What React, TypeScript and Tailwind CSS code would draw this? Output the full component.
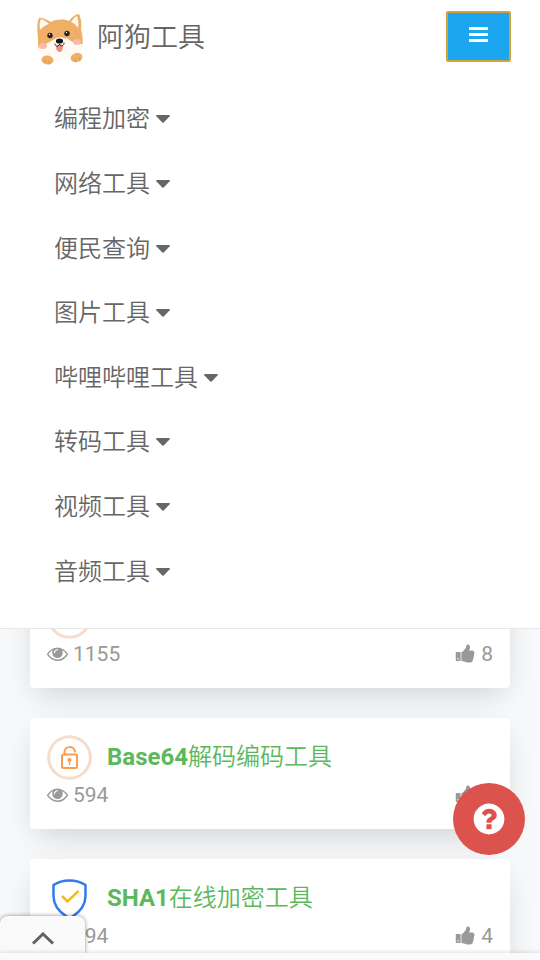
type Tool = {
	icon: 'lock' | 'shield';
	prefix: string;
	name: string;
	views: number;
	likes: number;
};

const menu = [
	'编程加密',
	'网络工具',
	'便民查询',
	'图片工具',
	'哔哩哔哩工具',
	'转码工具',
	'视频工具',
	'音频工具',
];

const tools: Tool[] = [
	{ icon: 'lock', prefix: 'MD5', name: '在线加密工具', views: 1155, likes: 8 },
	{ icon: 'lock', prefix: 'Base64', name: '解码编码工具', views: 594, likes: 5 },
	{ icon: 'shield', prefix: 'SHA1', name: '在线加密工具', views: 494, likes: 4 },
];

function DogLogo() {
	return (
		<svg className="w-12 h-[54px]" viewBox="0 0 48 54" aria-hidden="true">
			<path
				d="M2 25C1 17 1 9 3 5c2-1 8 2 12 4 6-3 13-3 18-1 3-4 7-7 10-7 2 4 3 10 2 16 2 5 2 12 1 18-2 4-7 7-11 8H12C6 42 2 37 2 32z"
				fill="#efaf66"
			/>
			<path d="M4 17C3 12 4 8 5 6c3 1 6 3 8 5-4 1-7 4-9 6z" fill="#fffaf5" />
			<path d="M35 9c2-3 4-5 6-6 1 4 2 7 1 12-2-3-4-5-7-6z" fill="#fffaf5" />
			<path
				d="M3 33c5-1 10-3 14-6 2-5 4-9 6-13 2 4 6 9 9 12 4 3 8 5 14 5 1 9-5 16-22 17C10 48 2 43 3 33z"
				fill="#fffaf3"
			/>
			<path d="M18 8c4-1 9-1 13 0 2 6 2 12-1 18-5-3-9-2-13 1-3-6-2-13 1-19z" fill="#efaf66" />
			<ellipse cx="7" cy="33" rx="4" ry="3" fill="#f9b9ac" />
			<ellipse cx="41" cy="29" rx="4" ry="3" fill="#f9b9ac" />
			<circle cx="14" cy="22.500" r="2.700" fill="#29211f" />
			<circle cx="31" cy="20.500" r="2.700" fill="#29211f" />
			<circle cx="13.500" cy="21.500" r="0.700" fill="#fff" />
			<circle cx="30.500" cy="19.500" r="0.700" fill="#fff" />
			<path d="M20 33q4-2 7-1 0 7-3 7-4 0-4-6z" fill="#f28e83" />
			<ellipse cx="23.500" cy="28" rx="3.600" ry="2.600" fill="#171313" />
			<path
				d="M19 31c0 3 4 3 4.500 0 1 3 5 2 4.500-1"
				fill="none"
				stroke="#352522"
				strokeWidth="1"
				strokeLinecap="round"
			/>
			<ellipse cx="11.500" cy="47" rx="6" ry="4.500" transform="rotate(8 11.500 47)" fill="#efaf66" />
			<ellipse cx="40.500" cy="44.500" rx="6" ry="4.500" transform="rotate(-16 40.500 44.500)" fill="#efaf66" />
			<path
				d="M9 47v3M13 48v3M39 46l1 3M43 45l1 3"
				stroke="#d98f45"
				strokeWidth="0.700"
				strokeLinecap="round"
			/>
		</svg>
	);
}

function EyeIcon() {
	return (
		<svg className="size-[21px] -mt-px" viewBox="0 0 1792 1792" fill="currentColor" aria-hidden="true">
			<path d="M1664 960q-152-236-381-353 61 104 61 225 0 185-131.5 316.5t-316.5 131.5-316.5-131.5-131.5-316.5q0-121 61-225-229 117-381 353 133 205 333.5 326.5t434.5 121.5 434.5-121.5 333.5-326.5zm-720-384q0-20-14-34t-34-14q-125 0-214.5 89.5t-89.5 214.5q0 20 14 34t34 14 34-14 14-34q0-86 61-147t147-61q20 0 34-14t14-34zm848 384q0 34-20 69-140 230-376.5 368.5t-499.5 138.5-499.5-139-376.5-368q-20-35-20-69t20-69q140-229 376.5-368t499.5-139 499.5 139 376.5 368q20 35 20 69z" />
		</svg>
	);
}

function ThumbIcon() {
	return (
		<svg className="size-[21px] -mt-px" viewBox="0 0 1792 1792" fill="currentColor" aria-hidden="true">
			<path d="M320 1344q0-26-19-45t-45-19q-27 0-45.5 19t-18.5 45q0 27 18.5 45.5t45.5 18.5q26 0 45-18.5t19-45.5zm160-512v640q0 26-19 45t-45 19h-288q-26 0-45-19t-19-45v-640q0-26 19-45t45-19h288q26 0 45 19t19 45zm1184 0q0 86-55 149 15 44 15 76 3 76-43 137 17 56 0 117-15 57-54 94 9 112-49 181-64 76-197 78h-129q-66 0-144-15.5t-121.5-29-120.5-39.5q-123-43-158-44-26-1-45-19.500t-19-44.500v-641q0-25 18-43.500t43-20.500q24-2 76-59t101-121q68-87 101-120 18-18 31-48t17.500-48.500 13.500-60.500q7-39 12.500-61t19.500-52 34-50q19-19 45-19 46 0 82.500 10.500t60 26 40 40.500 24 45 12 50 5 45 .5 39q0 38-9.500 76t-19 60-27.500 56q-3 6-10 18t-11 22-8 24h277q78 0 135 57t57 135z" />
		</svg>
	);
}

function ToolIcon({ kind }: { kind: Tool['icon'] }) {
	if (kind === 'shield')
		return (
			<svg className="size-[45px] shrink-0" viewBox="0 0 45 45" fill="none" aria-hidden="true">
				<path
					d="M22.500 4.500C17 4.500 11 6 6.500 9v11c0 9 6 16 13 20.500q3 1.500 6 0c7-4.500 13-11.500 13-20.500V9c-4.500-3-10.500-4.500-16-4.500z"
					stroke="#3478ee"
					strokeWidth="2.500"
					strokeLinejoin="round"
				/>
				<path d="M15 20l5.500 5.500 11-10.500" stroke="#fdb813" strokeWidth="2.500" />
			</svg>
		);
	return (
		<svg className="size-[45px] shrink-0" viewBox="0 0 45 45" fill="none" aria-hidden="true">
			<circle cx="22.500" cy="22.500" r="20.800" stroke="#f5dccc" strokeWidth="3" />
			<g stroke="#ff9b4d" strokeWidth="2">
				<rect x="15" y="19.500" width="15" height="13.500" rx="1.500" />
				<path d="M17.500 19.500v-2c0-7 9.500-7 10.500-1" strokeLinecap="round" />
				<path d="M22.500 26v4" strokeWidth="1.500" />
			</g>
			<circle cx="22.500" cy="25" r="2" fill="#ff9b4d" />
		</svg>
	);
}

function ToolCard({ tool }: { tool: Tool }) {
	return (
		<article className="rounded-sm bg-white px-[17px] pt-[17px] pb-[19px] shadow-[0_12px_30px_-6px_rgba(0,0,0,0.16)]">
			<a href="#" className="flex items-center gap-[15px] text-2xl leading-[45px] text-[#5cb85c]">
				<ToolIcon kind={tool.icon} />
				<span className="font-[350]">
					<b className="font-bold">{tool.prefix}</b>
					{tool.name}
				</span>
			</a>
			<div className="flex justify-between text-[21px] leading-[30px] text-[#999]">
				<span className="flex items-center gap-[5px]">
					<EyeIcon />
					{tool.views}
				</span>
				<span className="flex items-center gap-[5px]">
					<ThumbIcon />
					{tool.likes}
				</span>
			</div>
		</article>
	);
}

export default function App() {
	return (
		<div className="h-screen overflow-hidden bg-[#f8f9fb] font-[Roboto,'Noto_Sans_CJK_SC',sans-serif] text-[#666]">
			<header className="relative z-10 border-b border-[#e7e7e7] bg-white pb-6">
				<div className="flex items-start justify-between pl-9 pr-[29px] pt-[11px]">
					<a href="#" className="flex items-center gap-[13px] pt-[2px] text-[27px] leading-[50px] font-[350]">
						<DogLogo />
						<span className="-mt-1">阿狗工具</span>
					</a>
					<button
						type="button"
						aria-label="菜单"
						className="flex h-[51px] w-[65px] items-center justify-center rounded-xs border-2 border-[#d6a13a] bg-[#1ca6ef] pb-1">
						<svg className="h-[15px] w-[19px]" viewBox="0 0 19 15" fill="#fff">
							<rect width="19" height="3" rx="0.500" />
							<rect y="6" width="19" height="3" rx="0.500" />
							<rect y="12" width="19" height="3" rx="0.500" />
						</svg>
					</button>
				</div>
				<nav className="mt-5 grid h-[517px] grid-rows-8 pl-[54px] text-2xl font-[350]">
					{menu.map((label) => (
						<button key={label} type="button" className="flex items-center gap-[6px] text-left">
							{label}
							<svg className="h-2 w-[14px]" viewBox="0 0 14 8" fill="currentColor" aria-hidden="true">
								<path d="M0.800 0h12.400q1 0.300 0.500 1.200L7.700 7.500q-0.700 0.700-1.400 0L0.300 1.200Q-0.200 0.300 0.800 0z" />
							</svg>
						</button>
					))}
				</nav>
			</header>

			<main className="-mt-[52px] flex flex-col gap-[30px] px-[30px]">
				{tools.map((tool) => (
					<ToolCard key={tool.prefix} tool={tool} />
				))}
			</main>

			<button
				type="button"
				aria-label="帮助"
				className="fixed bottom-[105px] right-[15px] z-20 flex size-[72px] items-center justify-center rounded-full bg-[#dc524c] text-white">
				<svg className="size-9" viewBox="0 0 1792 1792" fill="currentColor">
					<path d="M1024 1376v-192q0-14-9-23t-23-9h-192q-14 0-23 9t-9 23v192q0 14 9 23t23 9h192q14 0 23-9t9-23zm256-672q0-88-55.5-163t-138.5-116-170-41q-243 0-371 213-15 24 8 42l132 100q7 6 19 6 16 0 25-12 53-68 86-92 34-24 86-24 48 0 85.5 26t37.5 59q0 38-20 61t-68 45q-63 28-115.5 86.5t-52.5 125.5v36q0 14 9 23t23 9h192q14 0 23-9t9-23q0-19 21.5-49.5t54.5-49.5q32-18 49-28.5t46-35 44.5-48 28-60.5 12.5-81zm384 192q0 209-103 385.5t-279.5 279.5-385.5 103-385.5-103-279.5-279.5-103-385.5 103-385.5 279.5-279.5 385.5-103 385.5 103 279.5 279.5 103 385.5z" />
				</svg>
			</button>

			{/* collapsed bottom drawer */}
			<div className="fixed inset-x-0 bottom-0 z-20">
				<button
					type="button"
					aria-label="展开"
					className="flex h-[37px] w-[85px] items-center justify-center rounded-t-lg bg-[#fafafa] pt-2 shadow-[0_0_4px_rgba(0,0,0,0.45)]">
					<svg className="h-[13px] w-6" viewBox="0 0 24 13" fill="none">
						<path d="M2 11.500L12 2l10 9.500" stroke="#616161" strokeWidth="3" />
					</svg>
				</button>
				<div className="relative h-[7px] bg-[#fafafa] shadow-[0_-1px_4px_rgba(0,0,0,0.12)]" />
			</div>
		</div>
	);
}
